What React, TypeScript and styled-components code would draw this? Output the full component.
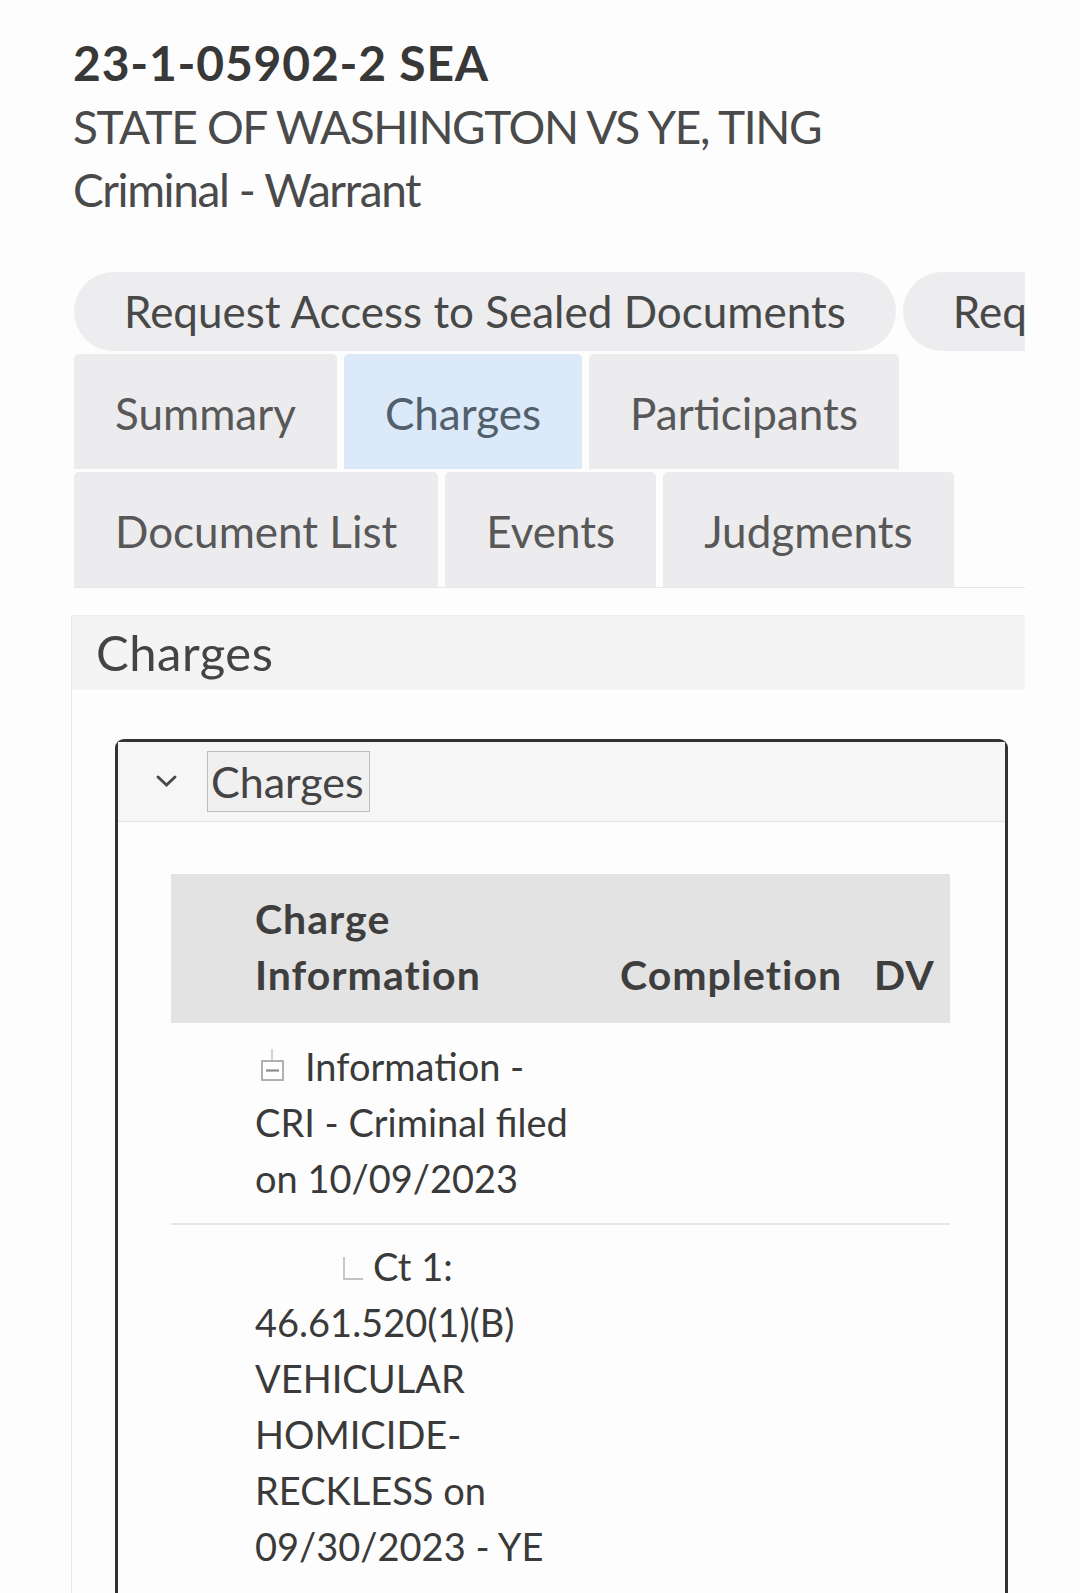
import React from 'react';
import styled, {createGlobalStyle} from 'styled-components';

const GlobalStyle = createGlobalStyle`
  body {
    margin: 0;
    background: #fdfdfd;
    font-family: Lato, "Open Sans", "Noto Sans", sans-serif;
    color: #444;
  }
`

const Page = styled.div`
  margin-left: 71px;
  width: 954px;
  overflow: hidden;
  padding-top: 31px;
`
const CaseHeader = styled.div`
  padding-left: 2px;
`
const CaseLine = styled.div<{$bold?: boolean}>`
  font-size: ${p => (p.$bold ? '48px' : '46px')};
  line-height: 63.5px;
  font-weight: ${p => (p.$bold ? 700 : 400)};
  color: ${p => (p.$bold ? '#383838' : '#4a4a4a')};
  letter-spacing: ${p => (p.$bold ? '0.8px' : '-1.4px')};
  white-space: nowrap;
`
const ActionBar = styled.div`
  display: flex;
  gap: 7px;
  margin-top: 50px;
  padding-left: 3px;
`
const Pill = styled.button`
  flex-shrink: 0;
  height: 79px;
  border: none;
  border-radius: 40px;
  padding: 0 50px;
  background: #ededef;
  font-family: inherit;
  font-size: 44px;
  line-height: 79px;
  color: #484848;
  white-space: nowrap;
`
const TabList = styled.div`
  display: flex;
  flex-wrap: wrap;
  gap: 3px 7px;
  margin-top: 3px;
  margin-left: 3px;
  border-bottom: 1px solid #e6e6e6;
`
const Tab = styled.div<{$active?: boolean}>`
  height: 115px;
  box-sizing: border-box;
  padding: 4px 41px 0;
  line-height: 111px;
  font-size: 44px;
  border-radius: 5px 5px 0 0;
  background: ${p => (p.$active ? '#dbe9f8' : '#ececee')};
  color: ${p => (p.$active ? '#52606e' : '#585858')};
  white-space: nowrap;
`
const Panel = styled.section`
  margin-top: 27px;
  border-left: 1px solid #e8e8e8;
  border-top: 1px solid #efefef;
`
const PanelHeader = styled.h2`
  margin: 0;
  height: 74px;
  padding-left: 24px;
  background: #f4f4f4;
  font-size: 49px;
  font-weight: 400;
  letter-spacing: 0.5px;
  line-height: 73px;
  color: #444;
`
const PanelBody = styled.div`
  padding: 49px 17px 0 43px;
`
const Box = styled.div`
  border: 3px solid #333;
  border-bottom: none;
  border-radius: 9px 9px 0 0;
  padding-bottom: 120px;
`
const BoxHeader = styled.div`
  display: flex;
  align-items: center;
  gap: 28px;
  height: 79px;
  padding-left: 36px;
  background: #f6f6f7;
  border-bottom: 1px solid #e4e4e4;
`
const FocusLabel = styled.span`
  height: 59px;
  padding: 0 5px 0 3px;
  border: 1px solid #bdbdbd;
  background: #f0f0f0;
  font-size: 43px;
  line-height: 59px;
  color: #444;
`
const TableWrap = styled.div`
  padding: 52px 55px 0 53px;
`
const Grid = styled.div`
  display: grid;
  grid-template-columns: 433px 254px 1fr;
`
const HeadCell = styled.div<{$first?: boolean}>`
  align-self: stretch;
  display: flex;
  align-items: flex-end;
  background: #e3e3e4;
  padding: 17px 0 20px ${p => (p.$first ? '84px' : '16px')};
  font-size: 41px;
  font-weight: 700;
  letter-spacing: 1px;
  line-height: 56px;
  color: #3e3e3e;
`
const Cell = styled.div<{$last?: boolean}>`
  grid-column: 1 / -1;
  padding: ${p => (p.$last ? '13px 0 0 84px' : '15px 0 17px 84px')};
  border-bottom: ${p => (p.$last ? 'none' : '2px solid #e6e6e6')};
  font-size: 38px;
  line-height: 56px;
  color: #3a3a3a;
  white-space: nowrap;
`
const TreeIcon = styled.svg<{$indent?: number}>`
  vertical-align: -4px;
  margin-left: ${p => p.$indent || 0}px;
  margin-right: ${p => (p.$indent ? 8 : 14)}px;
`

function Chevron() {
  return (
    <svg width="25" height="14" viewBox="0 0 25 14">
      <path d="M4 3 L12.5 11 L21 3" fill="none" stroke="#4a4a4a" strokeWidth="3" strokeLinecap="round" />
    </svg>
  )
}

function Collapse() {
  return (
    <TreeIcon $indent={4} width="32" height="36" viewBox="0 0 32 36" style={{marginRight: 14}}>
      <line x1="13" y1="0" x2="13" y2="12" stroke="#c4c4c4" strokeWidth="1.5" />
      <rect x="3" y="12" width="21" height="19" fill="#fff" stroke="#a8a8a8" strokeWidth="1.8" />
      <line x1="7" y1="21.5" x2="20" y2="21.5" stroke="#8a8a8a" strokeWidth="2.2" />
    </TreeIcon>
  )
}

function Branch() {
  return (
    <TreeIcon $indent={86} width="24" height="30" viewBox="0 0 24 30">
      <path d="M3 2 V24 H22" fill="none" stroke="#c2c2c2" strokeWidth="1.8" />
    </TreeIcon>
  )
}

const tabs = ['Summary', 'Charges', 'Participants', 'Document List', 'Events', 'Judgments']

function App() {
  return (
    <Page>
      <GlobalStyle />
      <CaseHeader>
        <CaseLine $bold>23-1-05902-2 SEA</CaseLine>
        <CaseLine>STATE OF WASHINGTON VS YE, TING</CaseLine>
        <CaseLine>Criminal - Warrant</CaseLine>
      </CaseHeader>
      <ActionBar>
        <Pill>Request Access to Sealed Documents</Pill>
        <Pill>Request Copies</Pill>
      </ActionBar>
      <TabList>
        {tabs.map(t => <Tab key={t} $active={t === 'Charges'}>{t}</Tab>)}
      </TabList>
      <Panel>
        <PanelHeader>Charges</PanelHeader>
        <PanelBody>
          <Box>
            <BoxHeader>
              <Chevron />
              <FocusLabel>Charges</FocusLabel>
            </BoxHeader>
            <TableWrap>
              <Grid>
                <HeadCell $first>Charge<br />Information</HeadCell>
                <HeadCell>Completion</HeadCell>
                <HeadCell>DV</HeadCell>
                <Cell>
                  <Collapse />Information -<br />
                  CRI - Criminal filed<br />
                  on 10/09/2023
                </Cell>
                <Cell $last>
                  <Branch />Ct 1:<br />
                  46.61.520(1)(B)<br />
                  VEHICULAR<br />
                  HOMICIDE-<br />
                  RECKLESS on<br />
                  09/30/2023 - YE
                </Cell>
              </Grid>
            </TableWrap>
          </Box>
        </PanelBody>
      </Panel>
    </Page>
  );
}
export default App
